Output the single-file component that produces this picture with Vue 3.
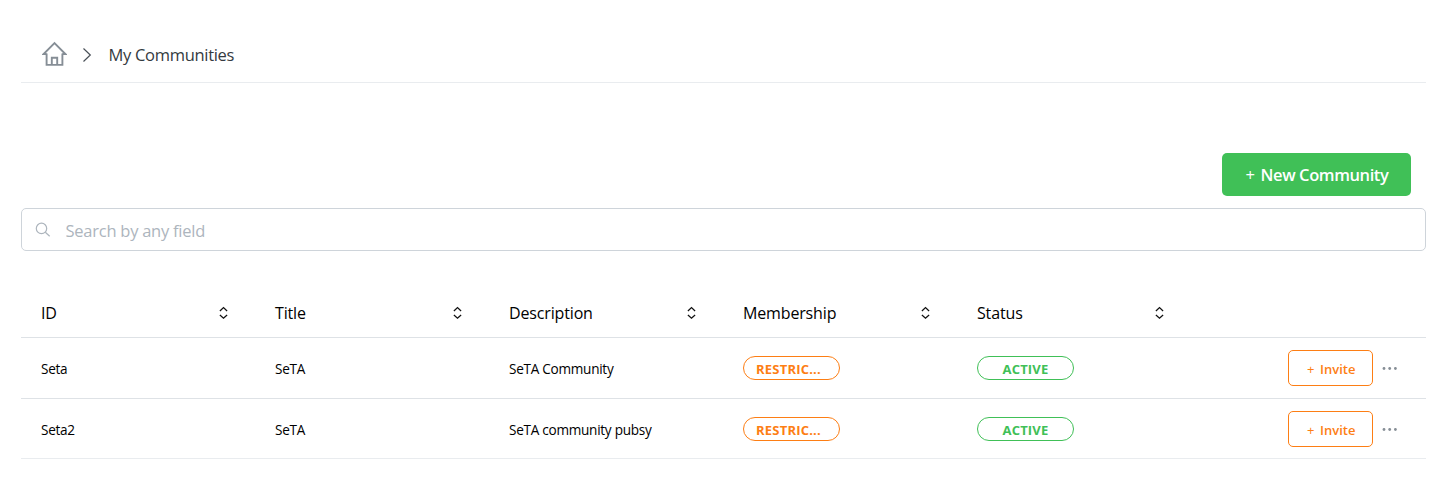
<script setup>
const columns = [
  { key: 'id', label: 'ID' },
  { key: 'title', label: 'Title' },
  { key: 'description', label: 'Description' },
  { key: 'membership', label: 'Membership' },
  { key: 'status', label: 'Status' },
]

const communities = [
  { id: 'Seta', title: 'SeTA', description: 'SeTA Community', membership: 'RESTRIC...', status: 'ACTIVE' },
  { id: 'Seta2', title: 'SeTA', description: 'SeTA community pubsy', membership: 'RESTRIC...', status: 'ACTIVE' },
]
</script>

<template>
  <main class="page">
    <nav class="breadcrumbs">
      <svg class="home" width="25" height="26" viewBox="0 0 25 26" fill="none" stroke="#868e96" stroke-width="1.9">
        <path d="M4.6 13H1.6L12.5 2.1 23.4 13h-3M4.6 12.5v11.4h15.8V12.5M9.8 23.9v-7.1h5.4v7.1" />
      </svg>
      <svg class="chevron" width="10" height="16" viewBox="0 0 10 16" fill="none" stroke="#495057" stroke-width="1.2">
        <path d="M1.5 1.5 8.3 8l-6.8 6.5" />
      </svg>
      <span class="crumb">My Communities</span>
    </nav>

    <div class="toolbar">
      <button class="create"><span class="plus">+</span><span>New Community</span></button>
    </div>

    <label class="search">
      <svg width="16" height="16" viewBox="0 0 16 16" fill="none" stroke="#adb5bd" stroke-width="1.2">
        <circle cx="6.5" cy="6.4" r="5.2" />
        <path d="m10.3 10.2 4.4 4.1" />
      </svg>
      <input type="text" placeholder="Search by any field" />
    </label>

    <div class="table">
      <div class="row head">
        <div v-for="c in columns" :key="c.key" class="cell">
          <span>{{ c.label }}</span>
          <svg width="10" height="14" viewBox="0 0 10 14" fill="none" stroke="#111" stroke-width="1.3">
            <path d="M1.9 4.9 5.5 1.6 9.1 4.9M1.9 8.9l3.6 3.3 3.6-3.3" />
          </svg>
        </div>
      </div>
      <div v-for="c in communities" :key="c.id" class="row item">
        <div class="cell text">{{ c.id }}</div>
        <div class="cell text">{{ c.title }}</div>
        <div class="cell text">{{ c.description }}</div>
        <div class="cell"><span class="badge orange">{{ c.membership }}</span></div>
        <div class="cell"><span class="badge green">{{ c.status }}</span></div>
        <div class="actions">
          <button class="invite"><span class="plus">+</span><span>Invite</span></button>
          <svg width="16" height="6" viewBox="0 0 16 6" fill="#868e96">
            <circle cx="2" cy="3.5" r="1.4" /><circle cx="7.7" cy="3.5" r="1.4" /><circle cx="13.4" cy="3.5" r="1.4" />
          </svg>
        </div>
      </div>
    </div>
  </main>
</template>

<style>
body { background: #fff; }
</style>

<style scoped>
.page {
  box-sizing: border-box;
  height: 484px;
  padding: 27px 12px 0 21px;
  font-family: "Segoe UI", "Open Sans", "Noto Sans", sans-serif;
  color: #000;
}
button { font-family: inherit; cursor: pointer; padding: 0; }
svg { flex: none; display: block; }
.breadcrumbs {
  box-sizing: border-box;
  height: 56px;
  display: flex;
  align-items: center;
  padding-left: 21px;
  border-bottom: 1px solid #e9ecef;
}
.home { margin-top: -2px; }
.chevron { margin-left: 15px; }
.crumb { margin-left: 16.5px; font-size: 16.5px; letter-spacing: -0.3px; color: #343a40; }
.toolbar { display: flex; justify-content: flex-end; margin: 70px 15px 12px 0; }
.create {
  box-sizing: border-box;
  width: 189px;
  height: 43px;
  display: flex;
  align-items: center;
  padding-left: 23.5px;
  border: 0;
  border-radius: 5px;
  background: #40c057;
  color: #fff;
  font-size: 16.5px;
  font-weight: 600;
  letter-spacing: -0.4px;
  white-space: nowrap;
}
.plus { font-weight: 500; text-align: left; }
.create .plus { width: 15px; }
.search {
  box-sizing: border-box;
  height: 43px;
  display: flex;
  align-items: center;
  padding-left: 13px;
  border: 1px solid #ced4da;
  border-radius: 5px;
}
.search input {
  flex: 1;
  margin-left: 14.5px;
  padding: 2px 0 0;
  border: 0;
  outline: 0;
  font: 16.5px "Segoe UI", "Open Sans", "Noto Sans", sans-serif;
  letter-spacing: -0.25px;
}
.search input::placeholder { color: #adb5bd; opacity: 1; }
.table { margin-top: 37px; }
.row {
  box-sizing: border-box;
  display: grid;
  grid-template-columns: repeat(5, 234px) 1fr;
  align-items: center;
  border-bottom: 1px solid #dee2e6;
}
.head { height: 50px; font-size: 16px; letter-spacing: -0.15px; }
.cell { padding: 0 27px 0 20px; display: flex; align-items: center; justify-content: space-between; }
.item { height: 61px; font-size: 13.6px; letter-spacing: -0.28px; }
.item:last-child { height: 60px; border-color: #e9ecef; }
.item:last-child .text { padding-top: 2px; }
.badge {
  box-sizing: border-box;
  width: 97px;
  height: 24px;
  padding: 2px 12px 0;
  border: 1px solid;
  border-radius: 12px;
  font-size: 13px;
  line-height: 21px;
  font-weight: 700;
  letter-spacing: 0.2px;
  text-align: center;
  white-space: nowrap;
}
.orange { padding-right: 18px; color: #fd7e14; }
.green { color: #40c057; }
.actions { display: flex; align-items: center; padding-left: 97px; }
.invite {
  box-sizing: border-box;
  width: 85px;
  height: 36px;
  display: flex;
  align-items: center;
  padding: 2px 0 0 18px;
  margin-right: 9px;
  border: 1px solid #fd7e14;
  border-radius: 5px;
  background: #fff;
  color: #fd7e14;
  font-size: 13px;
  font-weight: 600;
}
.invite .plus { width: 13px; }
</style>
